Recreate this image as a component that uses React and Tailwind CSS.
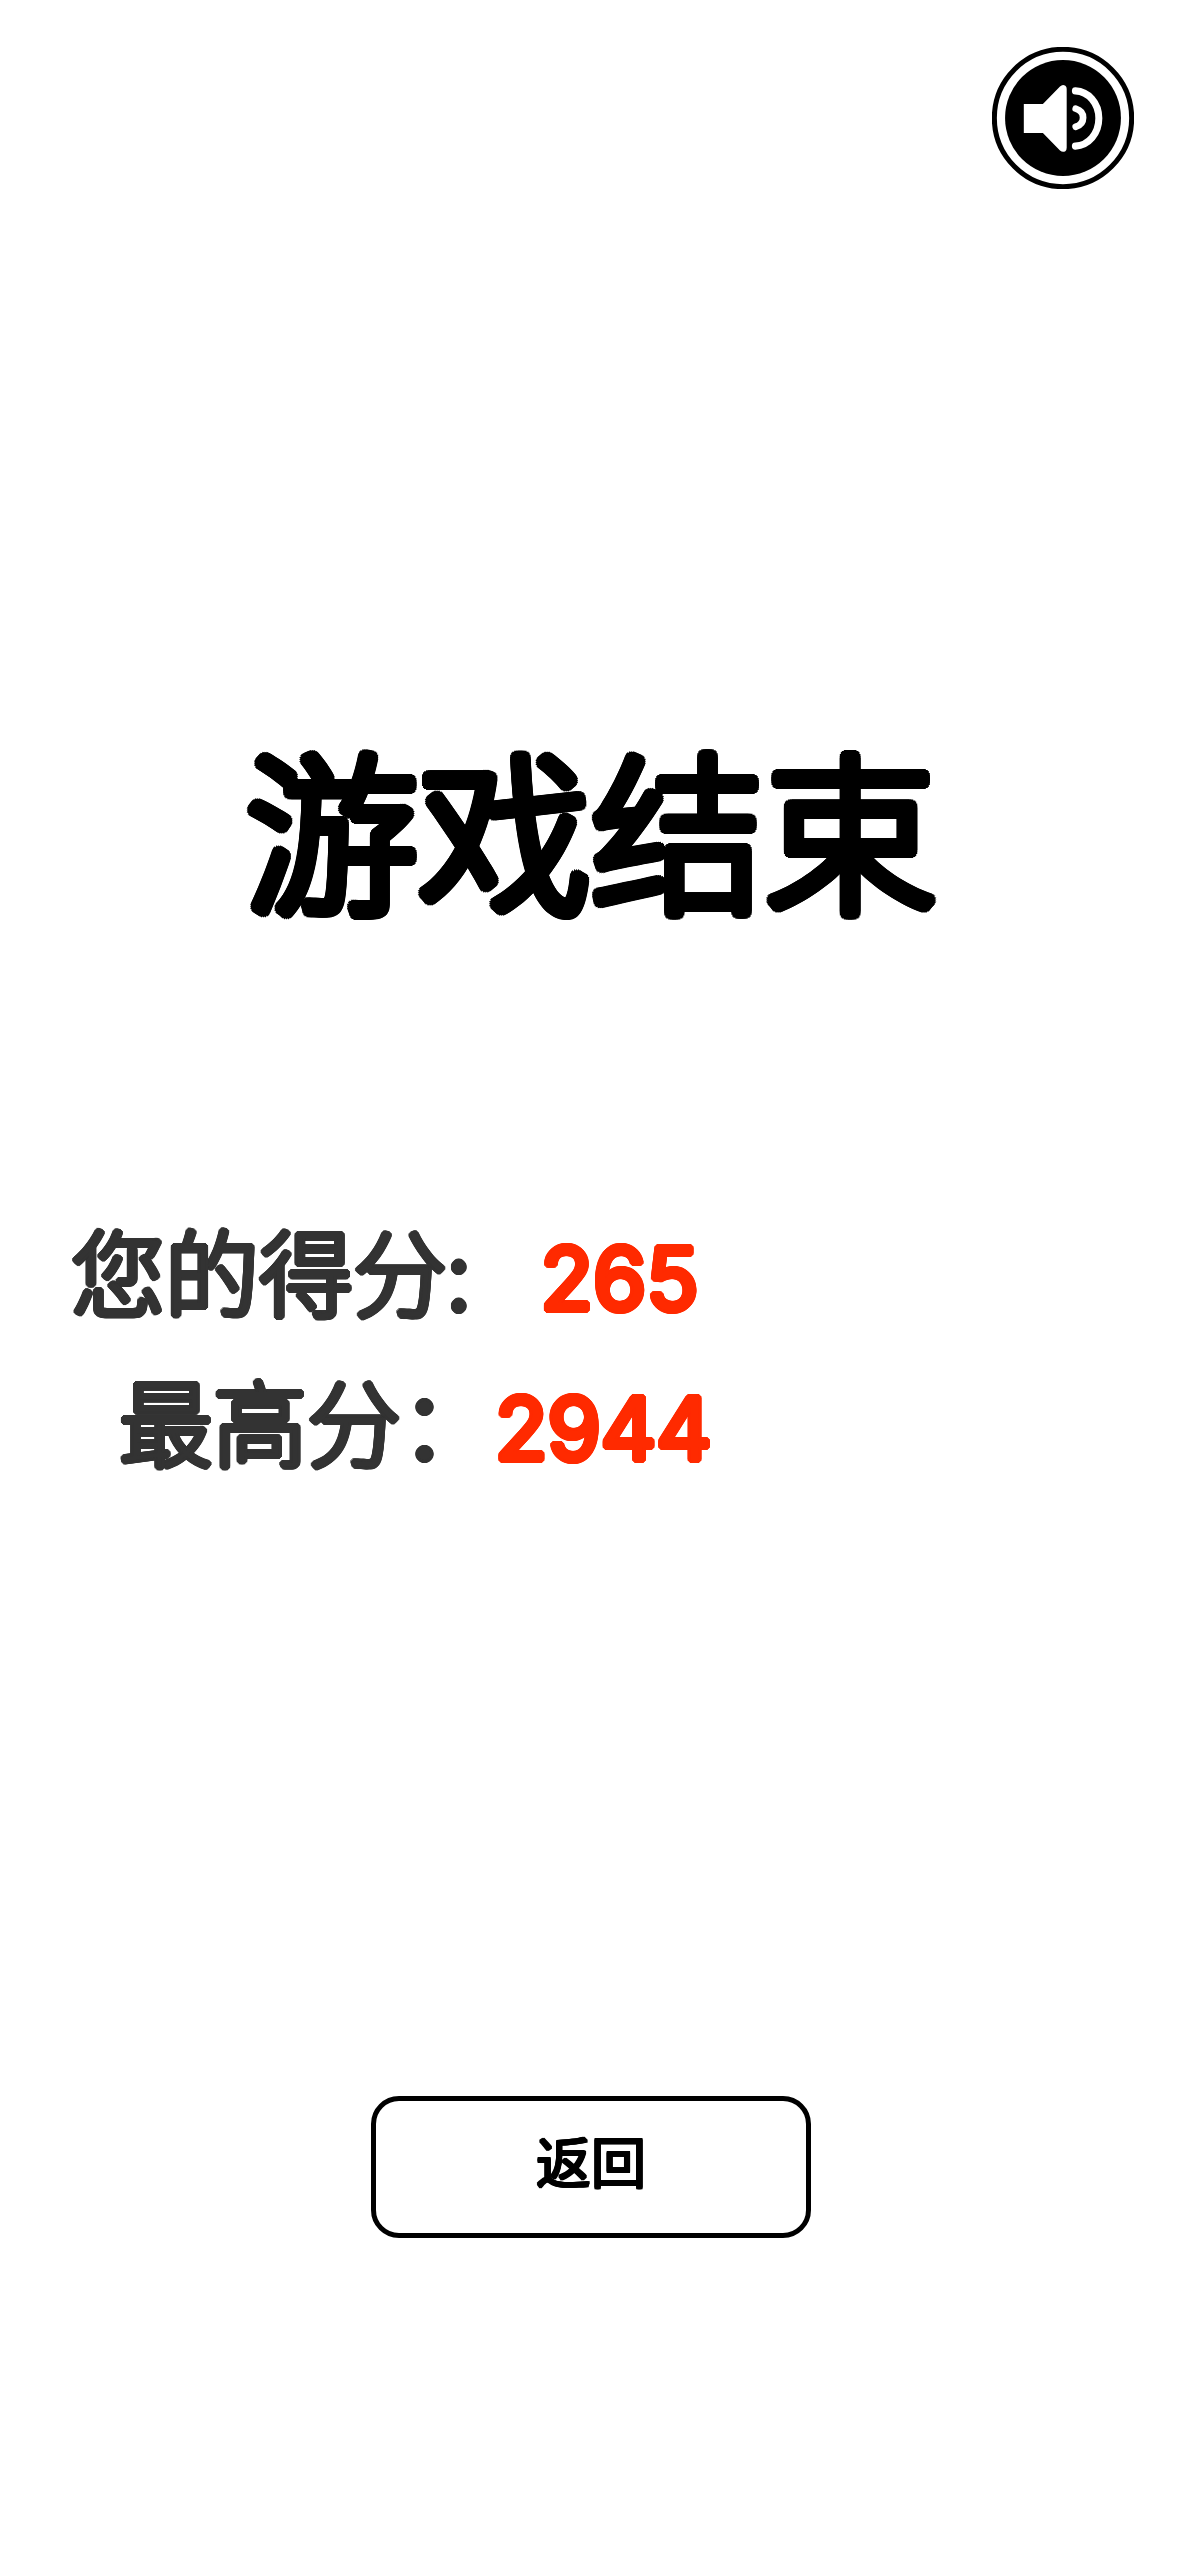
function SoundIcon() {
  return (
    <svg viewBox="39 51 424 424" className="size-full" aria-hidden="true">
      <circle cx="251" cy="263" r="205" fill="#fff" stroke="#000" strokeWidth="15" />
      <circle cx="251" cy="263" r="173" fill="#000" />
      <path d="M134 221H191L242 169Q250 161 258 167Q262 170 262 176V352Q262 359 258 362Q250 367 242 360L191 308H134Z" fill="#fff" />
      <path d="M289 235C302 239 311 249 311 262C311 275 302 285 289 289" fill="none" stroke="#fff" strokeWidth="20" strokeLinecap="round" />
      <path d="M288 182C327 184 358 218 358 264C358 310 327 345 288 347" fill="none" stroke="#fff" strokeWidth="21" strokeLinecap="round" />
    </svg>
  );
}

// Text shadows without blur, set in a ring, thicken the strokes and round their ends.
const roundTitle =
  "font-light [text-shadow:6px_0,6px_2px,5px_4px,4px_5px,2px_6px,0_6px,-2px_6px,-4px_5px,-5px_4px,-6px_2px,-6px_0,-6px_-2px,-5px_-4px,-4px_-5px,-2px_-6px,0_-6px,2px_-6px,4px_-5px,5px_-4px,6px_-2px]";
const roundScore =
  "[text-shadow:3px_0,3px_1px,2px_2px,1px_3px,0_3px,-1px_3px,-2px_2px,-3px_1px,-3px_0,-3px_-1px,-2px_-2px,-1px_-3px,0_-3px,1px_-3px,2px_-2px,3px_-1px]";
const roundButton =
  "font-normal [text-shadow:1px_0,1px_1px,0_1px,-1px_1px,-1px_0,-1px_-1px,0_-1px,1px_-1px]";

function Score({ label, value, className }) {
  return (
    <div className={className}>
      <dt className={`font-light text-[#333333] ${roundScore}`}>{label}</dt>
      <dd className={`font-[Inter,sans-serif] text-[86px] leading-none font-normal text-[#ff2a00] ${roundScore}`}>{value}</dd>
    </div>
  );
}

export default function App() {
  return (
    <main className="flex min-h-screen flex-col bg-white font-['Noto_Sans_CJK_SC',sans-serif] text-black">
      <header className="flex justify-end pt-[47px] pr-12">
        <button type="button" aria-label="声音" className="size-[142px] rounded-full">
          <SoundIcon />
        </button>
      </header>
      <h1 className={`mt-[531px] text-center text-[173px] leading-[210px] ${roundTitle}`}>游戏结束</h1>
      <dl className="mt-[264px] text-[94px] leading-[150px] whitespace-nowrap">
        <Score label="您的得分:" value="265" className="flex items-baseline gap-[70px] pl-[71px]" />
        <Score label="最高分：" value="2944" className="flex items-baseline pl-[119px]" />
      </dl>
      <button
        type="button"
        className={`mx-auto mt-[602px] h-[142px] w-[440px] max-w-full rounded-[28px] border-5 border-black pb-4 text-[55px] ${roundButton}`}
      >
        返回
      </button>
    </main>
  );
}
